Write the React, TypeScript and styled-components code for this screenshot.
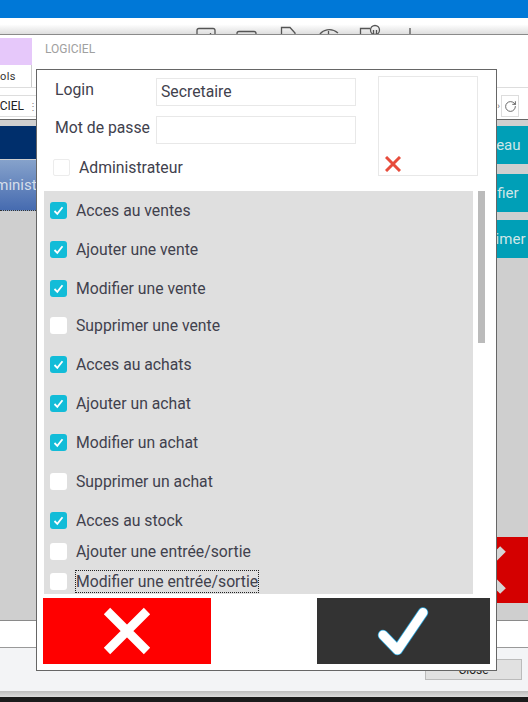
import React from "react";
import styled, { createGlobalStyle } from "styled-components";
import { RotateCw } from "lucide-react";

const GlobalStyle = createGlobalStyle`
  html, body {
    margin: 0;
    padding: 0;
    background: #fff;
  }
`;

const Page = styled.div`
  position: relative;
  width: 528px;
  height: 702px;
  overflow: hidden;
  display: flex;
  flex-direction: column;
  font-family: Roboto, "Liberation Sans", sans-serif;
`;

const TitleBar = styled.div`
  height: 18px;
  background: #0078d7;
`;

const Toolbar = styled.div`
  height: 16px;
  box-sizing: content-box;
  display: flex;
  gap: 20px;
  padding-left: 196px;
  overflow: hidden;
  background: linear-gradient(#fff 40%, #dedede);
  border-bottom: 1px solid #8a8a8a;
`;

const ToolIcon = styled.svg`
  width: 20px;
  height: 16px;
  overflow: visible;
  fill: none;
  stroke: #555;
  stroke-width: 1.3;
`;

const TopStrip = styled.div`
  height: 30px;
  display: flex;
  background: #fff;
`;

const LilacTile = styled.div`
  width: 32px;
  margin-top: 3px;
  background: #e6c8fa;
`;

const AppName = styled.div`
  margin-left: 13px;
  margin-top: 7px;
  font-size: 12px;
  line-height: 14px;
  color: #a0a0a0;
`;

const TabRow = styled.div`
  height: 23px;
  background: #fff;
  border-bottom: 1px solid #ddd;
  box-sizing: border-box;
`;

const Tab = styled.div`
  width: 32px;
  height: 22px;
  box-sizing: border-box;
  border-right: 1px solid #ccc;
  font-size: 11px;
  line-height: 23px;
  letter-spacing: 0.4px;
  text-align: right;
  padding-right: 16px;
  color: #333;
`;

const AddressRow = styled.div`
  height: 31px;
  display: flex;
  justify-content: space-between;
  padding: 7px 9px 2px 0;
  box-sizing: border-box;
  background: #fff;
`;

const AddressInput = styled.div`
  width: 36px;
  box-sizing: border-box;
  border-top: 1px solid #ddd;
  border-bottom: 1px solid #ddd;
  overflow: hidden;
  display: flex;
  justify-content: flex-end;
  gap: 4px;
  font-size: 12px;
  line-height: 21px;
  color: #222;
  white-space: nowrap;
`;

const Spinner = styled.span`
  flex: none;
  width: 8px;
  color: #888;
  font-size: 10px;
`;

const RefreshGroup = styled.div`
  display: flex;
  align-items: center;
  gap: 1px;
  color: #666;
  font-size: 9px;
`;

const RefreshButton = styled.div`
  width: 18px;
  height: 22px;
  box-sizing: border-box;
  border: 1px solid #ddd;
  display: flex;
  align-items: center;
  justify-content: center;
  color: #555;
`;

const Content = styled.div`
  flex: 1;
  min-height: 0;
  display: flex;
  justify-content: space-between;
  padding-top: 6px;
  background: #cfcfcf;
  border-top: 1px solid #666;
  border-bottom: 1px solid #8a8a8a;
`;

const LeftColumn = styled.div`
  width: 60px;
  display: flex;
  flex-direction: column;
`;

const NavyBanner = styled.div`
  height: 33px;
  background: #002f6c;
`;

const MenuItem = styled.div`
  height: 51px;
  margin-top: 1px;
  box-sizing: border-box;
  overflow: hidden;
  background: linear-gradient(#86a2cb, #466bb0);
  border-bottom: 1px dotted #333;
  color: #d5deea;
  font-size: 15px;
  line-height: 50px;
  white-space: nowrap;
`;

const MenuLabel = styled.span`
  margin-left: -23px;
  display: inline-block;
`;

const RightColumn = styled.div`
  width: 74px;
  display: flex;
  flex-direction: column;
  padding-bottom: 17px;
`;

const TealButton = styled.div<{ $top: number }>`
  height: 38px;
  margin-top: ${(p) => p.$top}px;
  background: #009fb7;
  color: #cfe6e8;
  font-size: 15px;
  line-height: 38px;
  text-align: center;
  white-space: nowrap;
`;

const DangerTile = styled.div`
  height: 66px;
  margin-top: auto;
  background: #d40000;
  display: flex;
  align-items: center;
`;

const DangerIcon = styled.svg`
  width: 74px;
  height: 66px;
  stroke: #d5d5d5;
  stroke-width: 8;
  fill: none;
`;

const Footer = styled.div`
  height: 27px;
  flex: none;
  box-sizing: border-box;
  background: #fff;
  border-bottom: 1px solid #999;
`;

const StatusArea = styled.div`
  height: 43px;
  flex: none;
  box-sizing: border-box;
  display: flex;
  justify-content: flex-end;
  padding: 11px 6px 0 0;
  background: #f3f4f6;
`;

const CloseButton = styled.div`
  width: 97px;
  height: 21px;
  box-sizing: border-box;
  background: #e1e1e1;
  border: 1px solid #bbb;
  font-size: 12px;
  line-height: 20px;
  text-align: center;
  color: #222;
`;

const BottomEdge = styled.div`
  height: 6px;
  flex: none;
  background: linear-gradient(#bdbdbd, #dcdcdc);
`;

const Taskbar = styled.div`
  height: 5px;
  flex: none;
  background: #1b1b1b;
`;

const Dialog = styled.div`
  position: absolute;
  left: 36px;
  top: 69px;
  width: 461px;
  height: 602px;
  box-sizing: border-box;
  border: 1px solid #666;
  background: #fff;
  color: #41414d;
  display: flex;
  flex-direction: column;
`;

const TopSection = styled.div`
  height: 121px;
  display: flex;
  justify-content: space-between;
  padding: 6px 18px 0 18px;
  box-sizing: border-box;
`;

const Form = styled.div`
  display: flex;
  flex-direction: column;
  padding-top: 2px;
`;

const Field = styled.div`
  display: flex;
  margin-bottom: 10px;
`;

const FieldLabel = styled.label`
  width: 101px;
  font-size: 15.75px;
  line-height: 24px;
`;

const TextInput = styled.div`
  width: 200px;
  height: 28px;
  box-sizing: border-box;
  border: 1px solid #e8e8e8;
  padding-left: 4px;
  font-size: 15.75px;
  line-height: 26px;
`;

const AdminRow = styled.div`
  display: flex;
  align-items: center;
  gap: 9px;
  margin: 5px 0 0 -2px;
  font-size: 15.75px;
  line-height: 17px;
`;

const PlainBox = styled.span`
  width: 17px;
  height: 17px;
  box-sizing: border-box;
  border: 1px solid #ececec;
  border-radius: 2px;
`;

const PhotoBox = styled.div`
  width: 100px;
  height: 100px;
  box-sizing: border-box;
  border: 1px solid #e8e8e8;
  display: flex;
  align-items: flex-end;
  padding: 0 0 3px 6px;
`;

const RemoveIcon = styled.svg`
  width: 16px;
  height: 16px;
  stroke: #e74c3c;
  stroke-width: 3;
  fill: none;
`;

const ListRow = styled.div`
  display: flex;
  gap: 5px;
  padding-left: 7px;
`;

const PermissionList = styled.div`
  width: 429px;
  height: 403px;
  overflow: hidden;
  background: #dfdfdf;
  padding: 9px 0 0 6px;
  box-sizing: border-box;
`;

const Permission = styled.div<{ $gap: number }>`
  display: flex;
  align-items: center;
  gap: 9px;
  height: 20px;
  margin-top: ${(p) => p.$gap}px;
  font-size: 15.75px;
`;

const CheckBox = styled.span<{ $checked: boolean }>`
  flex: none;
  width: 17px;
  height: 17px;
  border-radius: 3px;
  background: ${(p) => (p.$checked ? "#12bcd8" : "#fff")};
  display: flex;
  align-items: center;
  justify-content: center;
`;

const CheckMark = styled.svg`
  width: 11px;
  height: 11px;
  stroke: #fff;
  stroke-width: 1.8;
  fill: none;
`;

const PermissionLabel = styled.span<{ $focused: boolean }>`
  padding: 1px 0;
  outline: ${(p) => (p.$focused ? "1px dotted #222" : "none")};
`;

const ScrollThumb = styled.div`
  width: 7px;
  height: 152px;
  background: #bbb;
`;

const ActionBar = styled.div`
  display: flex;
  justify-content: space-between;
  padding: 4px 6px 0;
`;

const ActionButton = styled.button<{ $kind: "cancel" | "confirm" }>`
  width: ${(p) => (p.$kind === "cancel" ? 168 : 173)}px;
  height: 66px;
  padding: 0;
  border: none;
  background: ${(p) => (p.$kind === "cancel" ? "#ff0000" : "#333333")};
  display: flex;
  align-items: center;
  justify-content: center;
`;

const ActionIcon = styled.svg`
  width: 56px;
  height: 56px;
  fill: none;
`;

const permissions = [
  { label: "Acces au ventes", checked: true, gap: 0 },
  { label: "Ajouter une vente", checked: true, gap: 19 },
  { label: "Modifier une vente", checked: true, gap: 19 },
  { label: "Supprimer une vente", checked: false, gap: 17 },
  { label: "Acces au achats", checked: true, gap: 19 },
  { label: "Ajouter un achat", checked: true, gap: 19 },
  { label: "Modifier un achat", checked: true, gap: 19 },
  { label: "Supprimer un achat", checked: false, gap: 19 },
  { label: "Acces au stock", checked: true, gap: 19 },
  { label: "Ajouter une entrée/sortie", checked: false, gap: 11 },
  { label: "Modifier une entrée/sortie", checked: false, gap: 10, focused: true },
];

export default function App() {
  return (
    <Page>
      <GlobalStyle />
      <TitleBar />
      <Toolbar>
        <ToolIcon>
          <rect x="1" y="10.5" width="18" height="14" rx="2" />
          <path d="M14.5 15v1" />
        </ToolIcon>
        <ToolIcon>
          <rect x="1" y="13.5" width="19" height="12" rx="2" />
        </ToolIcon>
        <ToolIcon>
          <path d="M5.5 20V9.5H14L19 15v5" />
        </ToolIcon>
        <ToolIcon>
          <path d="M3.5 17C6 12 15 9 22 15M12.5 13v3" />
        </ToolIcon>
        <ToolIcon>
          <path d="M4.5 20v-9.5H14" />
          <circle cx="19" cy="12" r="4.5" />
          <path d="M17.5 12v4M20.5 12v4" />
        </ToolIcon>
        <ToolIcon>
          <path d="M14 10v8" />
        </ToolIcon>
      </Toolbar>
      <TopStrip>
        <LilacTile />
        <AppName>LOGICIEL</AppName>
      </TopStrip>
      <TabRow>
        <Tab>ols</Tab>
      </TabRow>
      <AddressRow>
        <AddressInput>
          ICIEL
          <Spinner>⋮</Spinner>
        </AddressInput>
        <RefreshGroup>
          ›
          <RefreshButton>
            <RotateCw size={13} strokeWidth={1.6} />
          </RefreshButton>
        </RefreshGroup>
      </AddressRow>
      <Content>
        <LeftColumn>
          <NavyBanner />
          <MenuItem>
            <MenuLabel>Administration</MenuLabel>
          </MenuItem>
        </LeftColumn>
        <RightColumn>
          <TealButton $top={0}>Nouveau</TealButton>
          <TealButton $top={10}>Modifier</TealButton>
          <TealButton $top={8}>Supprimer</TealButton>
          <DangerTile>
            <DangerIcon viewBox="0 0 74 66">
              <path d="M49 12L28 33L49 54" />
            </DangerIcon>
          </DangerTile>
        </RightColumn>
      </Content>
      <Footer />
      <StatusArea>
        <CloseButton>Close</CloseButton>
      </StatusArea>
      <BottomEdge />
      <Taskbar />

      <Dialog>
        <TopSection>
          <Form>
            <Field>
              <FieldLabel>Login</FieldLabel>
              <TextInput>Secretaire</TextInput>
            </Field>
            <Field>
              <FieldLabel>Mot de passe</FieldLabel>
              <TextInput />
            </Field>
            <AdminRow>
              <PlainBox />
              Administrateur
            </AdminRow>
          </Form>
          <PhotoBox>
            <RemoveIcon viewBox="0 0 16 16">
              <path d="M1 1L15 15M15 1L1 15" />
            </RemoveIcon>
          </PhotoBox>
        </TopSection>
        <ListRow>
          <PermissionList>
            {permissions.map((item) => (
              <Permission key={item.label} $gap={item.gap}>
                <CheckBox $checked={item.checked}>
                  {item.checked && (
                    <CheckMark viewBox="0 0 11 11">
                      <path d="M1.5 6L4.3 8.8L9.5 2.2" />
                    </CheckMark>
                  )}
                </CheckBox>
                <PermissionLabel $focused={!!item.focused}>{item.label}</PermissionLabel>
              </Permission>
            ))}
          </PermissionList>
          <ScrollThumb />
        </ListRow>
        <ActionBar>
          <ActionButton $kind="cancel">
            <ActionIcon viewBox="0 0 56 56">
              <path d="M8 8L48 48M48 8L8 48" stroke="#fff" strokeWidth="9" />
            </ActionIcon>
          </ActionButton>
          <ActionButton $kind="confirm">
            <ActionIcon viewBox="0 0 56 56">
              <path d="M7 32L21.5 47L47 9.5" stroke="#2aa5dc" strokeWidth="10.5" strokeLinecap="round" strokeLinejoin="round" />
              <path d="M7 32L21.5 47L47 9.5" stroke="#fff" strokeWidth="9" strokeLinecap="round" strokeLinejoin="round" />
            </ActionIcon>
          </ActionButton>
        </ActionBar>
      </Dialog>
    </Page>
  );
}
